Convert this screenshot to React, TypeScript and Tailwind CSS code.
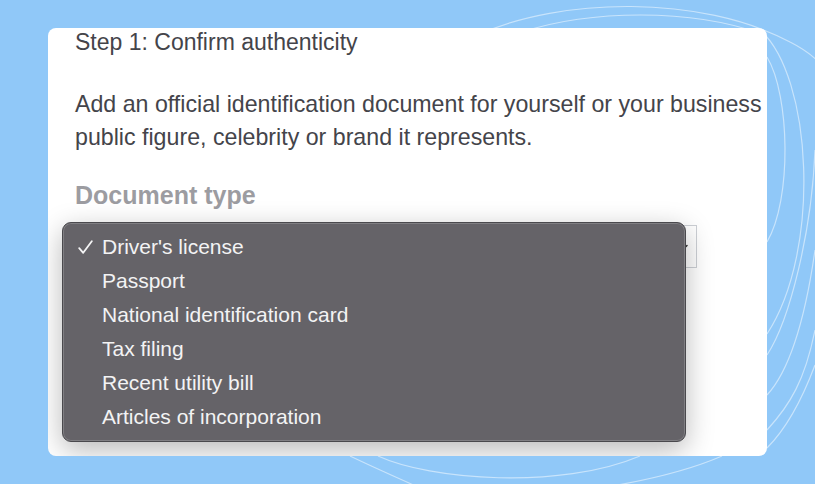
import { ChevronDown } from "lucide-react";

const OPTIONS = [
  "Driver's license",
  "Passport",
  "National identification card",
  "Tax filing",
  "Recent utility bill",
  "Articles of incorporation",
];

// faint white swirl lines behind the card
function Swirls() {
  return (
    <svg className="absolute inset-0" width="815" height="484" viewBox="0 0 815 484" fill="none">
      <g stroke="white" strokeOpacity="0.5" strokeWidth="1.2">
        <path d="M480 34 C560 -2 700 -6 790 42 C830 62 840 90 850 110" />
        <path d="M522 32 C590 10 690 8 762 34" />
        <path d="M767 57 C790 95 792 200 767 242" />
        <path d="M760 30 C812 75 822 250 767 334" />
        <path d="M815 150 C812 230 790 320 767 355" />
        <path d="M815 250 C805 320 790 370 767 395" />
        <path d="M815 330 C805 380 790 405 767 430" />
        <path d="M815 365 C800 405 785 430 767 448" />
        <path d="M350 456 C375 468 398 478 420 488" />
        <path d="M378 456 C430 480 560 490 640 456" />
        <path d="M722 456 C690 470 650 480 600 488" />
      </g>
    </svg>
  );
}

function CheckMark() {
  return (
    <svg width="15" height="14" viewBox="0 0 15 14" fill="none">
      <path d="M1.2 8.2 L5.2 12.8 L13.8 1.2" stroke="#f4f4f5" strokeWidth="1.8" strokeLinecap="round" strokeLinejoin="round" />
    </svg>
  );
}

export default function App() {
  return (
    <div
      className="relative h-[484px] w-[815px] overflow-hidden bg-[#90c8f8] pl-[48px] pt-[28px]"
      style={{ fontFamily: '"Liberation Sans", Arial, sans-serif' }}
    >
      <Swirls />
      <div className="relative h-[428px] w-[719px] overflow-hidden rounded-lg bg-white px-[27px]">
        <div className="whitespace-nowrap pt-[1px] text-[23px] leading-[26px] text-[#44444a]">Step 1: Confirm authenticity</div>
        <p className="mt-[33px] whitespace-nowrap text-[23.2px] leading-[33px] text-[#44444a]">
          Add an official identification document for yourself or your business
          <br />
          public figure, celebrity or brand it represents.
        </p>
        <div className="mt-[27px] text-[25px] font-bold leading-[28px] text-[#9c9ca1]">Document type</div>
        {/* the select itself, mostly hidden under the open menu */}
        <div className="mt-[16px] flex h-[43px] w-[622px] items-center justify-end border border-[#cdd0d5] pr-[6px]">
          <ChevronDown className="h-3 w-3 text-[#333]" strokeWidth={3} />
        </div>

        <div className="absolute left-[14px] top-[194px] h-[220px] w-[624px] rounded-[9px] border border-[#4a494d] bg-[#656368] py-[7px] shadow-[inset_0_0_0_1px_rgba(255,255,255,0.18),0_8px_28px_rgba(0,0,0,0.28)]">
          {OPTIONS.map((o, i) => (
            <div key={o} className="flex h-[34px] items-center text-[21px] text-[#f3f3f4]">
              <span className="flex w-[39px] shrink-0 justify-end pr-[9px]">{i === 0 && <CheckMark />}</span>
              <span>{o}</span>
            </div>
          ))}
        </div>
      </div>
    </div>
  );
}
